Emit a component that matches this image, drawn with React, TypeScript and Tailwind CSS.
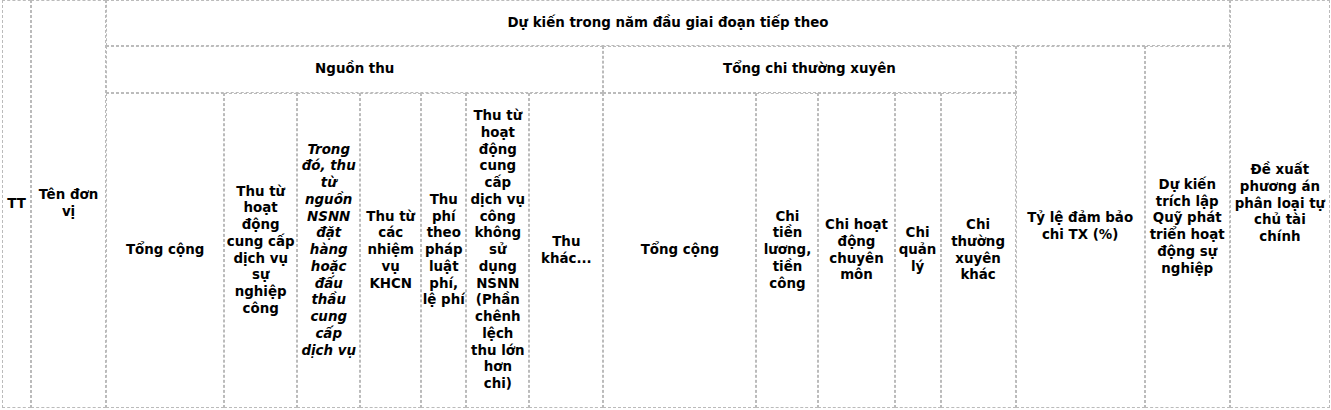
export default function App() {
  const base = 'border border-dashed border-[#bbbbbb] text-center align-middle font-bold'
  const cell = `${base} px-[2px]`
  const tight = `${base} px-0`
  const cols = [29, 75, 118, 73, 63, 61, 45, 63, 74, 153, 62, 76, 46, 75, 129, 85, 100]

  return (
    <div
      className="bg-white w-[1331px] h-[410px] text-black text-[13.4px] leading-[16.75px]"
      style={{ fontFamily: '"DejaVu Sans", Verdana, sans-serif' }}
    >
      <table className="table-fixed border-separate border-spacing-0 ml-[2px] w-[1328px]">
        <colgroup>
          {cols.map((w, i) => (
            <col key={i} style={{ width: w }} />
          ))}
        </colgroup>
        <tbody>
          <tr className="h-[46px]">
            <td rowSpan={3} className={cell}>TT</td>
            <td rowSpan={3} className={cell}>Tên đơn vị</td>
            <td colSpan={14} className={cell}>Dự kiến trong năm đầu giai đoạn tiếp theo</td>
            <td rowSpan={3} className={`${base} px-[3px]`}>
              Đề xuất phương án phân loại tự chủ tài chính
            </td>
          </tr>
          <tr className="h-[47px]">
            <td colSpan={7} className={cell}>Nguồn thu</td>
            <td colSpan={5} className={cell}>Tổng chi thường xuyên</td>
            <td rowSpan={2} className={cell}>Tỷ lệ đảm bảo chi TX (%)</td>
            <td rowSpan={2} className={tight}>
              Dự kiến trích lập Quỹ phát triển hoạt động sự nghiệp
            </td>
          </tr>
          <tr className="h-[315px]">
            <td className={cell}>Tổng cộng</td>
            <td className={tight}>Thu từ hoạt động cung cấp dịch vụ sự nghiệp công</td>
            <td className={`${cell} italic`}>
              Trong đó, thu từ nguồn NSNN đặt hàng hoặc đấu thầu cung cấp dịch vụ
            </td>
            <td className={cell}>Thu từ các nhiệm vụ KHCN</td>
            <td className={tight}>Thu phí theo pháp luật phí, lệ phí</td>
            <td className={cell}>
              Thu từ hoạt động cung cấp dịch vụ công không sử dụng NSNN (Phần chênh lệch thu lớn hơn chi)
            </td>
            <td className={cell}>Thu khác...</td>
            <td className={cell}>Tổng cộng</td>
            <td className={cell}>Chi tiền lương, tiền công</td>
            <td className={cell}>Chi hoạt động chuyên môn</td>
            <td className={cell}>Chi quản lý</td>
            <td className={cell}>Chi thường xuyên khác</td>
          </tr>
        </tbody>
      </table>
    </div>
  )
}
